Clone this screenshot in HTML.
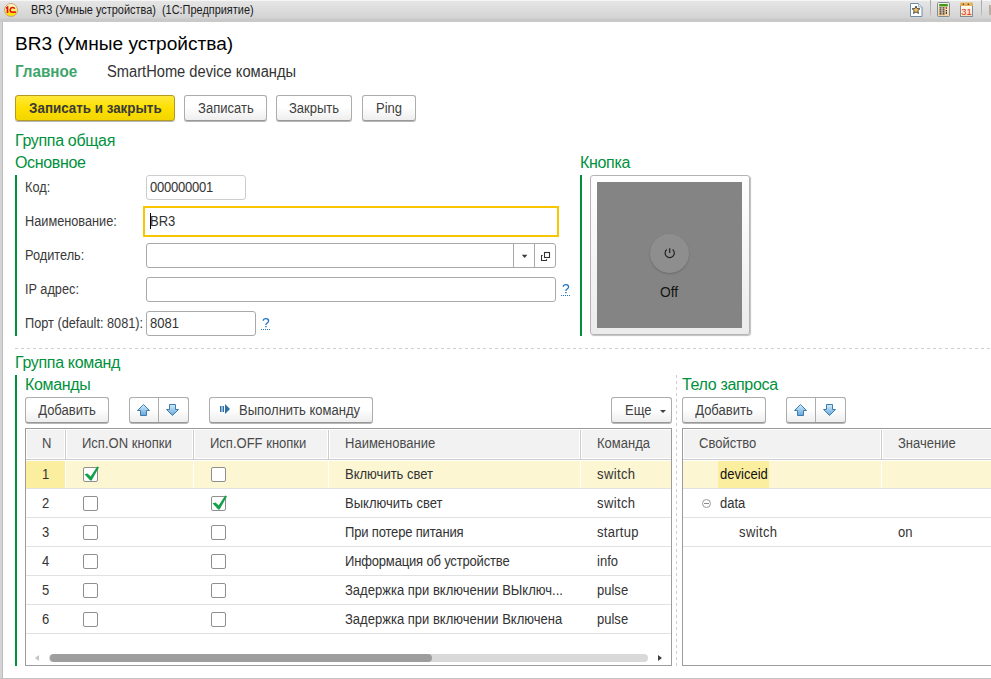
<!DOCTYPE html>
<html><head><meta charset="utf-8">
<style>
*{box-sizing:border-box;margin:0;padding:0}
html,body{width:991px;height:679px;overflow:hidden;background:#fff;font-family:"Liberation Sans",sans-serif;color:#333;position:relative}
.a{position:absolute;white-space:nowrap}
.t13{font-size:14px;line-height:15px;transform:scaleX(0.93);transform-origin:0 0}
.grn{color:#00913c}
.gt{font-size:16px;line-height:18px;color:#00913c;letter-spacing:-0.33px}
.btn{position:absolute;border:1px solid #acacac;border-bottom-color:#989898;border-radius:3px;background:linear-gradient(#ffffff 0%,#ffffff 45%,#eeeeee 100%);box-shadow:0 1px 0 rgba(0,0,0,.28);font-size:13px;line-height:15px;color:#404040;text-align:center}
.bt{display:inline-block;font-size:14px;transform:scaleX(0.93);transform-origin:50% 0}
.btl{transform-origin:0 0}
.fld{position:absolute;border:1px solid #b3b3b3;border-radius:3px;background:#fff}
.lb{transform:scaleX(0.91);color:#3a3a3a}
.vbar{position:absolute;width:2px;background:#00913c}
.hl{position:absolute;height:1px;background:#dcdcdc}
.cb{position:absolute;width:15px;height:15px;border:1px solid #8f8f8f;border-radius:2px;background:#fff}
</style></head><body>
<!-- title bar -->
<div class="a" style="left:0;top:0;width:991px;height:22px;background:linear-gradient(#f6f6f6 0px,#f6f6f6 1px,#e6e6e6 1px,#d3d3d3 18px,#c9c9c9 19px,#c9c9c9 22px)"></div>
<svg class="a" style="left:4px;top:3px" width="15" height="15" viewBox="0 0 15 15">
<defs><linearGradient id="lg" x1="0" y1="0" x2="0" y2="1"><stop offset="0" stop-color="#fff8d0"/><stop offset="0.5" stop-color="#fff07a"/><stop offset="0.8" stop-color="#ffe000"/><stop offset="1" stop-color="#f8d800"/></linearGradient></defs>
<circle cx="7" cy="7" r="6.5" fill="url(#lg)" stroke="#c9a084" stroke-width="1"/>
<path d="M2 5.4L3.5 4.3V9.9" fill="none" stroke="#e01010" stroke-width="1.7"/>
<path d="M10.8 5.6C10 4 6.6 3.8 6.2 6.4C6 8 6.5 9 7.5 9.1" fill="none" stroke="#e01010" stroke-width="1.5"/>
<path d="M7 9.1H12" stroke="#e01010" stroke-width="1.6"/>
</svg>
<div class="a" style="left:31px;top:4px;font-size:12px;line-height:13px;color:#1a1a1a;transform:scaleX(0.911);transform-origin:0 0">BR3 (Умные устройства)&nbsp; (1С:Предприятие)</div>

<div class="a" style="left:930px;top:0;width:1px;height:17px;background:linear-gradient(#a8a8a8,#b8b8b8 80%,rgba(184,184,184,0))"></div>
<div class="a" style="left:981px;top:0;width:1px;height:17px;background:linear-gradient(#a8a8a8,#b8b8b8 80%,rgba(184,184,184,0))"></div>
<svg class="a" style="left:910px;top:3px" width="13" height="14" viewBox="0 0 13 14">
<path d="M0.5 0.5H8.5L12 4V13.5H0.5Z" fill="#fff" stroke="#6e8ea8" stroke-width="1"/>
<path d="M8.5 0.5V4H12" fill="#dce8f2" stroke="#8fb0c8" stroke-width="0.8"/>
<path d="M6 3L7.1 5.6L9.9 5.8L7.8 7.6L8.5 10.4L6 8.9L3.5 10.4L4.2 7.6L2.1 5.8L4.9 5.6Z" fill="#f2c65a" stroke="#3a3a3a" stroke-width="0.9" stroke-linejoin="round"/>
</svg>
<svg class="a" style="left:937px;top:2px" width="13" height="15" viewBox="0 0 13 15">
<defs><linearGradient id="calc" x1="0" y1="0" x2="0" y2="1"><stop offset="0" stop-color="#fdf3e3"/><stop offset="1" stop-color="#f4cf9c"/></linearGradient></defs>
<rect x="0.5" y="0.5" width="12" height="14" rx="1" fill="url(#calc)" stroke="#7d8c96" stroke-width="1"/>
<rect x="2.2" y="2" width="8.6" height="2.4" fill="#3d9a1e"/>
<g fill="#222"><rect x="2.5" y="5.3" width="2" height="1.2"/><rect x="5.5" y="5.3" width="2" height="1.2"/><rect x="2.5" y="7.3" width="2" height="1.2"/><rect x="5.5" y="7.3" width="2" height="1.2"/><rect x="2.5" y="9.3" width="2" height="1.2"/><rect x="5.5" y="9.3" width="2" height="1.2"/><rect x="2.5" y="11.3" width="2" height="1.2"/><rect x="5.5" y="11.3" width="2" height="1.2"/><rect x="8.7" y="8" width="1.3" height="1.3"/><rect x="8.7" y="10.2" width="1.3" height="1.6"/></g>
<rect x="8.6" y="5" width="1.4" height="2" fill="#e03a2a"/>
</svg>
<svg class="a" style="left:960px;top:2px" width="13" height="15" viewBox="0 0 13 15">
<defs><linearGradient id="cal" x1="0" y1="0" x2="0" y2="1"><stop offset="0" stop-color="#fffdf6"/><stop offset="1" stop-color="#f6dcb4"/></linearGradient></defs>
<rect x="0.5" y="3.5" width="12" height="11" fill="url(#cal)" stroke="#7d8c96" stroke-width="1"/>
<rect x="0" y="0.5" width="13" height="3.5" rx="0.8" fill="#e8b25c"/>
<circle cx="3.3" cy="2.2" r="0.7" fill="#333"/><circle cx="8.3" cy="2.2" r="0.7" fill="#333"/>
<text x="6.5" y="13.3" text-anchor="middle" font-family="Liberation Sans" font-size="9.5" fill="#e3301f">31</text>
</svg>
<div class="a" style="left:989px;top:5px;width:2px;height:10px;background:#b8aca0"></div>
<!-- window border -->
<div class="a" style="left:0;top:22px;width:3px;height:657px;background:linear-gradient(90deg,#d4d4d4 0 2px,#bcbcbc 2px 3px)"></div>
<div class="a" style="left:0;top:678px;width:991px;height:1px;background:#c4c4c4"></div>

<!-- header -->
<div class="a" style="left:15px;top:33px;font-size:19.1px;line-height:21px;color:#000">BR3 (Умные устройства)</div>
<div class="a" style="left:15px;top:63px;font-size:16px;line-height:17px;font-weight:bold;color:#3da56b;transform:scaleX(0.95);transform-origin:0 0">Главное</div>
<div class="a" style="left:107px;top:63px;font-size:16px;line-height:17px;color:#333;transform:scaleX(0.917);transform-origin:0 0">SmartHome device команды</div>

<!-- buttons -->
<div class="btn" style="left:15px;top:95px;width:160px;height:26px;background:linear-gradient(#ffe83c,#fde000 50%,#f3d500);border-color:#b39a1c;font-weight:bold;color:#3a3a3a;padding-top:5px;padding-left:1px"><span class="bt" style="transform:scaleX(0.955)">Записать и закрыть</span></div>
<div class="btn" style="left:184px;top:95px;width:83px;height:26px;padding-top:5px"><span class="bt">Записать</span></div>
<div class="btn" style="left:276px;top:95px;width:76px;height:26px;padding-top:5px"><span class="bt">Закрыть</span></div>
<div class="btn" style="left:362px;top:95px;width:54px;height:26px;padding-top:5px"><span class="bt">Ping</span></div>


<!-- group general -->
<div class="a gt" style="left:15px;top:132px">Группа общая</div>
<div class="a gt" style="left:15px;top:154px">Основное</div>
<div class="vbar" style="left:15px;top:175px;height:161px"></div>
<div class="a t13 lb" style="left:25px;top:180px">Код:</div>
<div class="a t13 lb" style="left:25px;top:214px">Наименование:</div>
<div class="a t13 lb" style="left:25px;top:248px">Родитель:</div>
<div class="a t13 lb" style="left:25px;top:282px">IP адрес:</div>
<div class="a t13 lb" style="left:25px;top:316px">Порт (default: 8081):</div>
<div class="fld" style="left:146px;top:175px;width:100px;height:25px;border-color:#cdcdcd"></div>
<div class="a t13" style="left:150px;top:180px;letter-spacing:-0.25px">000000001</div>
<div class="a" style="left:143px;top:206px;width:416px;height:31px;border:2px solid #f8c600;background:#fff"></div>
<div class="a" style="left:150px;top:213px;width:1px;height:16px;background:#000"></div>
<div class="a t13" style="left:150px;top:214px">BR3</div>
<div class="fld" style="left:146px;top:243px;width:410px;height:25px;border-color:#a9a9a9"></div>
<div class="a" style="left:513px;top:244px;width:1px;height:23px;background:#a9a9a9"></div>
<div class="a" style="left:534px;top:244px;width:1px;height:23px;background:#a9a9a9"></div>
<svg class="a" style="left:521px;top:254px" width="8" height="5" viewBox="0 0 8 5"><path d="M0.8 0.8H6.4L3.6 3.9Z" fill="#3a3a3a"/></svg>
<svg class="a" style="left:539px;top:250px" width="12" height="12" viewBox="0 0 12 12"><rect x="5.5" y="2.5" width="5" height="5" fill="none" stroke="#333" stroke-width="1.1"/><path d="M3.6 5.5H2.5V10.5H7.5V9.3" fill="none" stroke="#333" stroke-width="1.1"/></svg>
<div class="fld" style="left:146px;top:277px;width:410px;height:25px;border-color:#a9a9a9"></div>
<svg class="a" style="left:561px;top:283px" width="10" height="12" viewBox="0 0 10 12"><path d="M2.3 3.7C2.3 2.3 3.4 1.6 4.9 1.6C6.5 1.6 7.6 2.6 7.6 3.9C7.6 5.1 6.7 5.6 5.9 6.2C5.1 6.8 4.9 7.2 4.9 8.1" fill="none" stroke="#1f74c6" stroke-width="1.3"/><rect x="4.2" y="9" width="1.5" height="1.2" fill="#1f74c6"/></svg><div class="a" style="left:561px;top:295px;width:10px;height:1px;background:repeating-linear-gradient(90deg,#1f74c6 0 1px,transparent 1px 2px)"></div>

<div class="fld" style="left:146px;top:311px;width:110px;height:25px;border-color:#a9a9a9"></div>
<div class="a t13" style="left:150px;top:316px">8081</div>
<svg class="a" style="left:261px;top:317px" width="10" height="12" viewBox="0 0 10 12"><path d="M2.3 3.7C2.3 2.3 3.4 1.6 4.9 1.6C6.5 1.6 7.6 2.6 7.6 3.9C7.6 5.1 6.7 5.6 5.9 6.2C5.1 6.8 4.9 7.2 4.9 8.1" fill="none" stroke="#1f74c6" stroke-width="1.3"/><rect x="4.2" y="9" width="1.5" height="1.2" fill="#1f74c6"/></svg><div class="a" style="left:261px;top:329px;width:10px;height:1px;background:repeating-linear-gradient(90deg,#1f74c6 0 1px,transparent 1px 2px)"></div>


<!-- group button -->
<div class="a gt" style="left:580px;top:154px">Кнопка</div>
<div class="vbar" style="left:580px;top:175px;height:161px"></div>
<div class="a" style="left:590px;top:175px;width:160px;height:160px;border:1px solid #b4b4b4;border-radius:3px;background:linear-gradient(#ffffff,#ebebeb);box-shadow:1px 1px 1px rgba(0,0,0,.25)"></div>
<div class="a" style="left:597px;top:182px;width:145px;height:146px;background:#848484"></div>
<div class="a" style="left:650px;top:234px;width:39px;height:39px;border-radius:50%;background:#8e8e8e;box-shadow:0 1px 2px rgba(0,0,0,.2)"></div>
<svg class="a" style="left:663px;top:247px" width="14" height="12" viewBox="0 0 14 12"><path d="M3.74 2.5A4.6 4.6 0 1 0 9.66 2.5" fill="none" stroke="#1e1e1e" stroke-width="1.15"/><path d="M6.7 1.2V6" stroke="#1e1e1e" stroke-width="1.15"/></svg>
<div class="a" style="left:660px;top:285px;font-size:13.8px;line-height:15px;color:#151515;-webkit-font-smoothing:antialiased">Off</div>

<!-- dashed separator -->
<div class="a" style="left:15px;top:348px;width:976px;height:1px;background:repeating-linear-gradient(90deg,#cfcfcf 0 3px,transparent 3px 6px)"></div>

<!-- group commands -->
<div class="a gt" style="left:15px;top:354px">Группа команд</div>
<div class="vbar" style="left:15px;top:375px;height:291px"></div>
<div class="a gt" style="left:25px;top:376px">Команды</div>
<div class="a gt" style="left:682px;top:376px">Тело запроса</div>
<div class="a" style="left:676px;top:375px;width:1px;height:291px;background:repeating-linear-gradient(180deg,#cfcfcf 0 3px,transparent 3px 6px)"></div>
<div class="btn" style="left:25px;top:397px;width:84px;height:26px;padding-top:5px"><span class="bt">Добавить</span></div>
<div class="btn" style="left:129px;top:397px;width:60px;height:26px"></div>
<div class="a" style="left:158px;top:398px;width:1px;height:24px;background:#acacac"></div>
<div class="btn" style="left:209px;top:397px;width:164px;height:26px;padding-top:5px;padding-left:29px;text-align:left"><span class="bt btl">Выполнить команду</span></div>
<div class="btn" style="left:611px;top:397px;width:61px;height:26px;padding-top:5px;padding-left:13px;text-align:left"><span class="bt btl">Еще</span></div>
<div class="a" style="left:660px;top:410px;width:0;height:0;border-left:3px solid transparent;border-right:3px solid transparent;border-top:3px solid #404040"></div>
<div class="btn" style="left:682px;top:397px;width:84px;height:26px;padding-top:5px"><span class="bt">Добавить</span></div>
<div class="btn" style="left:786px;top:397px;width:60px;height:26px"></div>
<div class="a" style="left:815px;top:398px;width:1px;height:24px;background:#acacac"></div>
<svg class="a" style="left:137px;top:404px" width="13" height="12" viewBox="0 0 13 12"><defs><linearGradient id="ga1" x1="0" y1="0" x2="0" y2="1"><stop offset="0" stop-color="#d4eefc"/><stop offset="1" stop-color="#62a6dc"/></linearGradient></defs><path d="M6.5 0.5L12.5 6.5H9.5V11.5H3.5V6.5H0.5Z" fill="url(#ga1)" stroke="#3f7cad" stroke-width="1" stroke-linejoin="round"/></svg><svg class="a" style="left:166px;top:404px" width="13" height="12" viewBox="0 0 13 12"><defs><linearGradient id="gd1" x1="0" y1="0" x2="0" y2="1"><stop offset="0" stop-color="#d4eefc"/><stop offset="1" stop-color="#62a6dc"/></linearGradient></defs><path d="M6.5 11.5L12.5 5.5H9.5V0.5H3.5V5.5H0.5Z" fill="url(#gd1)" stroke="#3f7cad" stroke-width="1" stroke-linejoin="round"/></svg><svg class="a" style="left:794px;top:404px" width="13" height="12" viewBox="0 0 13 12"><defs><linearGradient id="ga2" x1="0" y1="0" x2="0" y2="1"><stop offset="0" stop-color="#d4eefc"/><stop offset="1" stop-color="#62a6dc"/></linearGradient></defs><path d="M6.5 0.5L12.5 6.5H9.5V11.5H3.5V6.5H0.5Z" fill="url(#ga2)" stroke="#3f7cad" stroke-width="1" stroke-linejoin="round"/></svg><svg class="a" style="left:823px;top:404px" width="13" height="12" viewBox="0 0 13 12"><defs><linearGradient id="gd2" x1="0" y1="0" x2="0" y2="1"><stop offset="0" stop-color="#d4eefc"/><stop offset="1" stop-color="#62a6dc"/></linearGradient></defs><path d="M6.5 11.5L12.5 5.5H9.5V0.5H3.5V5.5H0.5Z" fill="url(#gd2)" stroke="#3f7cad" stroke-width="1" stroke-linejoin="round"/></svg><svg class="a" style="left:220px;top:404px" width="11" height="10" viewBox="0 0 11 10"><rect x="0" y="2" width="1.5" height="6" fill="#2f6fa8"/><rect x="2.5" y="2" width="1.5" height="6" fill="#2f6fa8"/><path d="M5 0L10 5L5 10Z" fill="#2f6fa8"/></svg>
<div class="a" style="left:25px;top:428px;width:647px;height:238px;border:1px solid #9c9c9c;background:#fff"></div>
<div class="a" style="left:682px;top:428px;width:309px;height:238px;border:1px solid #9c9c9c;border-right:none;background:#fff"></div>
<div class="a" style="left:27px;top:430px;width:644px;height:28px;background:#f2f2f2"></div><div class="a" style="left:64px;top:430px;width:3px;height:28px;background:#fff"></div><div class="a" style="left:192px;top:430px;width:3px;height:28px;background:#fff"></div><div class="a" style="left:327px;top:430px;width:3px;height:28px;background:#fff"></div><div class="a" style="left:579px;top:430px;width:3px;height:28px;background:#fff"></div><div class="a" style="left:27px;top:458px;width:644px;height:1px;background:#fff"></div><div class="a" style="left:26px;top:459px;width:645px;height:1px;background:#cdcdcd"></div><div class="a" style="left:684px;top:430px;width:307px;height:28px;background:#f2f2f2"></div><div class="a" style="left:880px;top:430px;width:3px;height:28px;background:#fff"></div><div class="a" style="left:684px;top:458px;width:307px;height:1px;background:#fff"></div><div class="a" style="left:683px;top:459px;width:308px;height:1px;background:#cdcdcd"></div><div class="a" style="left:65px;top:430px;width:1px;height:30px;background:#cdcdcd"></div><div class="a" style="left:193px;top:430px;width:1px;height:30px;background:#cdcdcd"></div><div class="a" style="left:328px;top:430px;width:1px;height:30px;background:#cdcdcd"></div><div class="a" style="left:580px;top:430px;width:1px;height:30px;background:#cdcdcd"></div><div class="a" style="left:881px;top:430px;width:1px;height:30px;background:#cdcdcd"></div><div class="a t13" style="left:42px;top:436px;color:#4a4a4a">N</div><div class="a t13" style="left:82px;top:436px;color:#4a4a4a">Исп.ON кнопки</div><div class="a t13" style="left:210px;top:436px;color:#4a4a4a">Исп.OFF кнопки</div><div class="a t13" style="left:345px;top:436px;color:#4a4a4a">Наименование</div><div class="a t13" style="left:597px;top:436px;color:#4a4a4a">Команда</div><div class="a t13" style="left:699px;top:436px;color:#4a4a4a">Свойство</div><div class="a t13" style="left:898px;top:436px;color:#4a4a4a">Значение</div><div class="a" style="left:26px;top:461px;width:645px;height:27px;background:#fcf6d2"></div><div class="a" style="left:26px;top:461px;width:39px;height:27px;background:#fcee9f"></div><div class="a" style="left:65px;top:461px;width:1px;height:27px;background:#fff"></div><div class="a" style="left:193px;top:461px;width:1px;height:27px;background:#fff"></div><div class="a" style="left:328px;top:461px;width:1px;height:27px;background:#fff"></div><div class="a" style="left:580px;top:461px;width:1px;height:27px;background:#fff"></div><div class="a" style="left:683px;top:461px;width:308px;height:27px;background:#fcf6d2"></div><div class="a" style="left:718px;top:461px;width:51px;height:27px;background:#fcee9f"></div><div class="a" style="left:881px;top:461px;width:1px;height:27px;background:#fff"></div><div class="a" style="left:26px;top:488px;width:645px;height:1px;background:#e1e1e1"></div><div class="a" style="left:683px;top:488px;width:308px;height:1px;background:#e1e1e1"></div><div class="a t13" style="left:42px;top:467px">1</div><div class="cb" style="left:83px;top:467px"></div><div class="cb" style="left:211px;top:467px"></div><svg class="a" style="left:83px;top:466px" width="16" height="16" viewBox="0 0 16 16"><path d="M1.5 8.2L4.6 7.4L7.6 10.6L14.2 0.6L16 1.2L8.6 14.4L7.2 14.4Z" fill="#13a049"/></svg><div class="a t13" style="left:345px;top:467px">Включить свет</div><div class="a t13" style="left:597px;top:467px;letter-spacing:0.4px">switch</div><div class="a" style="left:26px;top:517px;width:645px;height:1px;background:#e1e1e1"></div><div class="a" style="left:683px;top:517px;width:308px;height:1px;background:#e1e1e1"></div><div class="a t13" style="left:42px;top:496px">2</div><div class="cb" style="left:83px;top:496px"></div><div class="cb" style="left:211px;top:496px"></div><svg class="a" style="left:211px;top:495px" width="16" height="16" viewBox="0 0 16 16"><path d="M1.5 8.2L4.6 7.4L7.6 10.6L14.2 0.6L16 1.2L8.6 14.4L7.2 14.4Z" fill="#13a049"/></svg><div class="a t13" style="left:345px;top:496px">Выключить свет</div><div class="a t13" style="left:597px;top:496px;letter-spacing:0.4px">switch</div><div class="a" style="left:26px;top:546px;width:645px;height:1px;background:#e1e1e1"></div><div class="a" style="left:683px;top:546px;width:308px;height:1px;background:#e1e1e1"></div><div class="a t13" style="left:42px;top:525px">3</div><div class="cb" style="left:83px;top:525px"></div><div class="cb" style="left:211px;top:525px"></div><div class="a t13" style="left:345px;top:525px;letter-spacing:-0.19px">При потере питания</div><div class="a t13" style="left:597px;top:525px;letter-spacing:0.3px">startup</div><div class="a" style="left:26px;top:575px;width:645px;height:1px;background:#e1e1e1"></div><div class="a t13" style="left:42px;top:554px">4</div><div class="cb" style="left:83px;top:554px"></div><div class="cb" style="left:211px;top:554px"></div><div class="a t13" style="left:345px;top:554px;letter-spacing:-0.19px">Информация об устройстве</div><div class="a t13" style="left:597px;top:554px">info</div><div class="a" style="left:26px;top:604px;width:645px;height:1px;background:#e1e1e1"></div><div class="a t13" style="left:42px;top:583px">5</div><div class="cb" style="left:83px;top:583px"></div><div class="cb" style="left:211px;top:583px"></div><div class="a t13" style="left:345px;top:583px">Задержка при включении ВЫключ...</div><div class="a t13" style="left:597px;top:583px">pulse</div><div class="a" style="left:26px;top:633px;width:645px;height:1px;background:#e1e1e1"></div><div class="a t13" style="left:42px;top:612px">6</div><div class="cb" style="left:83px;top:612px"></div><div class="cb" style="left:211px;top:612px"></div><div class="a t13" style="left:345px;top:612px">Задержка при включении Включена</div><div class="a t13" style="left:597px;top:612px">pulse</div><div class="a t13" style="left:720px;top:467px;color:#111">deviceid</div><div class="a" style="left:702px;top:499px;width:9px;height:9px;border:1px solid #9a9a9a;border-radius:50%"></div><div class="a" style="left:704px;top:503px;width:5px;height:1px;background:#8a8a8a"></div><div class="a t13" style="left:720px;top:496px">data</div><div class="a t13" style="left:739px;top:525px;letter-spacing:0.4px">switch</div><div class="a t13" style="left:898px;top:525px">on</div><div class="a" style="left:49px;top:654px;width:599px;height:8px;border-radius:4px;background:#d9d9d9"></div><div class="a" style="left:50px;top:654px;width:382px;height:8px;border-radius:4px;background:#9e9e9e"></div><div class="a" style="left:35px;top:655px;width:0;height:0;border-top:3px solid transparent;border-bottom:3px solid transparent;border-right:4px solid #c4c4c4"></div><div class="a" style="left:658px;top:655px;width:0;height:0;border-top:3px solid transparent;border-bottom:3px solid transparent;border-left:4px solid #404040"></div>
</body></html>
